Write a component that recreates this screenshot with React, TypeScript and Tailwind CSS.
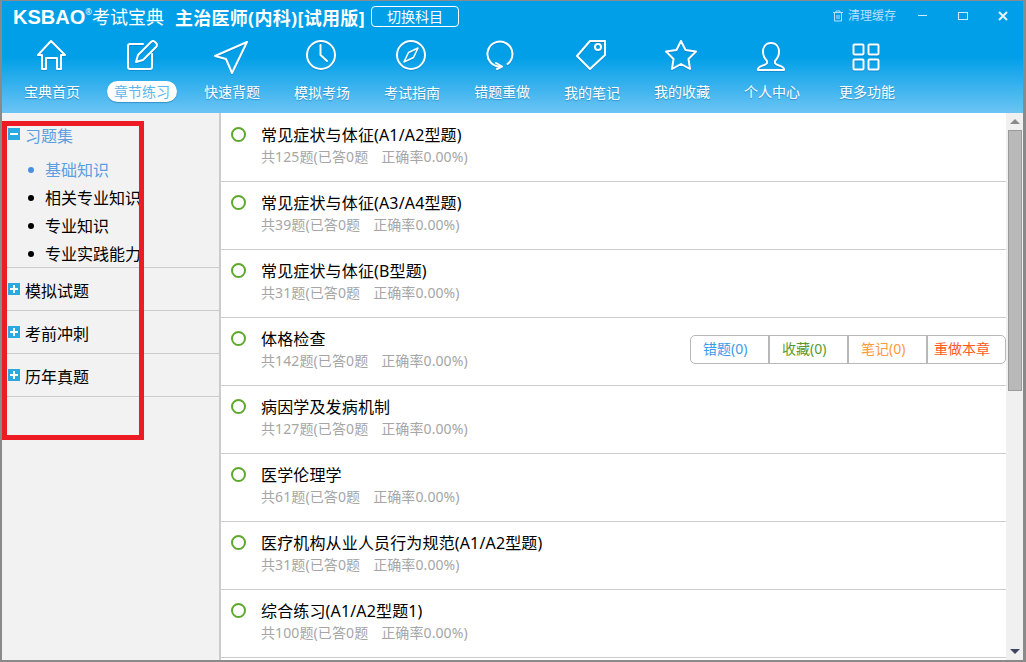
import type { ReactNode } from "react";

const sw = { fill: "none", stroke: "currentColor", strokeWidth: 2, strokeLinejoin: "round" as const, strokeLinecap: "round" as const };

const icons: Record<string, ReactNode> = {
  home: <path {...sw} d="M18 4 L5 18 H9 V32 H13 V21 H24 V32 H28 V18 H32 Z" />,
  edit: (
    <>
      <path {...sw} d="M20 7 H7 Q5 7 5 9 V30 Q5 32 7 32 H27 Q29 32 29 30 V17" />
      <path {...sw} d="M13 25 L15 18 L28 5 Q30 3 32 5 L33 6 Q35 8 33 10 L20 23 Z" />
    </>
  ),
  send: <path {...sw} d="M34 5 L2 19 L13 22 L19 36 Z" />,
  clock: (
    <>
      <circle {...sw} cx="18" cy="18" r="14" />
      <path {...sw} d="M17.5 8 V18 L24 24" />
    </>
  ),
  compass: (
    <>
      <circle {...sw} cx="18" cy="18" r="14" />
      <path {...sw} strokeWidth={1.6} d="M25 11 L20.5 20.5 L11 25 L15.5 15.5 Z" />
    </>
  ),
  retry: (
    <>
      <path {...sw} d="M24.5 27 A12.5 12.5 0 1 0 18 29.5" />
      <path {...sw} d="M13 26 L19 29.5 L14 32" />
    </>
  ),
  tag: (
    <>
      <path {...sw} d="M17 4 L4 19 L17 32 L32 18 V4 Z" />
      <circle {...sw} cx="25" cy="10" r="3" />
    </>
  ),
  star: <path {...sw} d="M18 4 L22.5 13 L33 14.5 L25.5 22 L27 32 L18 27 L9 32 L10.5 22 L3 14.5 L13.5 13 Z" />,
  user: <path {...sw} d="M18 6 C12 6 10 11 10 15 C10 19 12 22 14 24 V26 C14 28 5 29 5 32 V33 H31 V32 C31 29 22 28 22 26 V24 C24 22 26 19 26 15 C26 11 24 6 18 6 Z" />,
  grid: (
    <>
      <rect {...sw} x="5.5" y="7.5" width="10" height="10" rx="1" />
      <rect {...sw} x="20.5" y="7.5" width="10" height="10" rx="1" />
      <rect {...sw} x="5.5" y="22.5" width="10" height="10" rx="1" />
      <rect {...sw} x="20.5" y="22.5" width="10" height="10" rx="1" />
    </>
  ),
};

const navItems = [
  { label: "宝典首页", icon: "home" },
  { label: "章节练习", icon: "edit", active: true },
  { label: "快速背题", icon: "send" },
  { label: "模拟考场", icon: "clock", low: true },
  { label: "考试指南", icon: "compass", low: true },
  { label: "错题重做", icon: "retry" },
  { label: "我的笔记", icon: "tag", low: true },
  { label: "我的收藏", icon: "star" },
  { label: "个人中心", icon: "user" },
  { label: "更多功能", icon: "grid" },
];

const chapters = [
  { title: "常见症状与体征(A1/A2型题)", total: 125 },
  { title: "常见症状与体征(A3/A4型题)", total: 39 },
  { title: "常见症状与体征(B型题)", total: 31 },
  { title: "体格检查", total: 142, hover: true },
  { title: "病因学及发病机制", total: 127 },
  { title: "医学伦理学", total: 61 },
  { title: "医疗机构从业人员行为规范(A1/A2型题)", total: 31 },
  { title: "综合练习(A1/A2型题1)", total: 100 },
];

function TreeBox({ open }: { open?: boolean }) {
  return (
    <span className="relative h-3 w-3 shrink-0 bg-[#29abe2]">
      <span className="absolute top-[5px] left-[2px] h-[2px] w-2 bg-white" />
      {!open && <span className="absolute top-[2px] left-[5px] h-2 w-[2px] bg-white" />}
    </span>
  );
}

function TreeGroup({ label }: { label: string }) {
  return (
    <div className="flex h-[43px] items-start gap-[5px] border-b border-[#cccccc] pt-[15px] pl-[6px] text-black">
      <TreeBox />
      <span className="-mt-[4px] text-[16px] leading-[24px]">{label}</span>
    </div>
  );
}

function Sidebar() {
  const subs = ["基础知识", "相关专业知识", "专业知识", "专业实践能力"];
  return (
    <aside className="relative w-[219px] shrink-0 border-r-2 border-[#cccccc] bg-[#f2f2f2]">
      <div className="h-[155px] border-b border-[#cccccc] pt-[15px] pl-[6px]">
        <div className="flex items-start gap-[5px] text-[#5b9fe0]">
          <TreeBox open />
          <span className="-mt-[4px] text-[16px] leading-[24px]">习题集</span>
        </div>
        <ul className="mt-[8px]">
          {subs.map((s, i) => (
            <li
              key={s}
              className={`flex h-[28px] items-center gap-[11px] pl-[20px] text-[16px] whitespace-nowrap ${i === 0 ? "text-[#5b9fe0]" : "text-black"}`}
            >
              <span className={`h-[6px] w-[6px] rounded-full ${i === 0 ? "bg-[#4a90e2]" : "bg-black"}`} />
              {s}
            </li>
          ))}
        </ul>
      </div>
      <TreeGroup label="模拟试题" />
      <TreeGroup label="考前冲刺" />
      <TreeGroup label="历年真题" />
      <div className="absolute top-[8px] left-0 h-[319px] w-[142px] border-[5px] border-[#ed1c24]" />
    </aside>
  );
}

function ActionButtons() {
  const cell = "flex h-full w-[79px] items-center border-r-2 border-[#b8b8b8] pb-[2px] pl-[12px] text-[14px]";
  return (
    <div className="mb-[4px] flex h-[29px] w-[316px] items-center overflow-hidden rounded-[5px] border border-[#b8b8b8] bg-white">
      <span className={`${cell} text-[#3a9be8]`}>错题(0)</span>
      <span className={`${cell} text-[#5b9a2a]`}>收藏(0)</span>
      <span className={`${cell} text-[#ff9a3a]`}>笔记(0)</span>
      <span className="flex h-full flex-1 items-center pb-[2px] pl-[6px] text-[14px] text-[#ff5a1e]">重做本章</span>
    </div>
  );
}

function ChapterRow({ title, total, hover }: { title: string; total: number; hover?: boolean }) {
  return (
    <div className="flex h-[68px] shrink-0 items-center justify-between border-b border-[#cccccc] pl-[10px]">
      <div className="flex h-full items-start gap-[15px]">
        <span className="mt-[13px] h-[15px] w-[15px] rounded-full border-2 border-[#5fa82e]" />
        <div className="pt-[9px]">
          <div className="text-[16px] leading-[24px] tracking-[0.15px] text-black">{title}</div>
          <div className="text-[14px] leading-[20px] tracking-[0.1px] text-[#a6a6a6]">
            共{total}题(已答0题<span className="ml-[13px]">正确率0.00%)</span>
          </div>
        </div>
      </div>
      {hover && <ActionButtons />}
    </div>
  );
}

function Scrollbar() {
  return (
    <div className="flex w-[17px] shrink-0 flex-col items-center bg-[#f0f0f0]">
      <div className="flex h-[17px] w-full items-center justify-center">
        <span className="h-0 w-0 border-x-[5px] border-b-[5px] border-x-transparent border-b-[#8a8a8a]" />
      </div>
      <div className="ml-[1px] h-[261px] w-[14px] border border-[#9a9a9a] bg-[#b9b9b9]" />
      <div className="flex-1" />
      <div className="flex h-[17px] w-full items-center justify-center">
        <span className="h-0 w-0 border-x-[5px] border-t-[5px] border-x-transparent border-t-[#3f4560]" />
      </div>
    </div>
  );
}

export default function App() {
  return (
    <div className="flex h-[662px] w-[1026px] flex-col overflow-hidden border-t border-r-[3px] border-b-2 border-l-2 border-[#8a8a8a] bg-white font-['Noto_Sans','Noto_Sans_CJK_SC',sans-serif]">
      <header className="h-[112px] shrink-0 bg-[linear-gradient(#019fe8_0,#019fe8_50%,#6cc4f4_100%)] text-white">
        <div className="flex h-[31px] items-center pl-[11px]">
          <span className="font-['Liberation_Sans',sans-serif] text-[20px] leading-none font-bold">KSBAO</span>
          <span className="-mt-[10px] text-[8px] leading-none">®</span>
          <span className="text-[18px] leading-none">考试宝典</span>
          <span className="mt-[2px] ml-[11px] text-[18px] leading-none font-bold tracking-[0.3px]">主治医师(内科)[试用版]</span>
          <button className="ml-[6px] h-[21px] w-[88px] rounded-[4px] border border-white text-[14px] leading-none">切换科目</button>
          <div className="mb-[2px] ml-auto flex items-center text-[12px] text-[#b5e0f8]">
            <svg viewBox="0 0 12 12" className="h-3 w-3" fill="none" stroke="currentColor">
              <path d="M1 2.5 H11 M4 2.5 V1 H8 V2.5 M2.5 2.5 V11 H9.5 V2.5 M5 5 V9 M7 5 V9" />
            </svg>
            <span className="ml-[4px]">清理缓存</span>
            <span className="ml-[22px] h-[1px] w-[9px] bg-[#cfeafa]" />
            <span className="ml-[31px] h-[8px] w-[10px] border border-[#cfeafa]" />
            <svg viewBox="0 0 10 10" className="mr-[15px] ml-[30px] h-[10px] w-[10px]" stroke="#e4f4fd" strokeWidth="2">
              <path d="M1 1 L9 9 M9 1 L1 9" />
            </svg>
          </div>
        </div>
        <nav className="flex pt-[5px] pl-[5px]">
          {navItems.map((item, i) => (
            <div key={item.label} className={`flex w-[90px] flex-col items-center ${i === 9 ? "ml-[5px]" : ""}`}>
              <svg viewBox="0 0 36 36" className="-ml-[2px] h-9 w-9 overflow-visible drop-shadow-[0_1px_0_rgba(0,90,160,0.35)]">
                {icons[item.icon]}
              </svg>
              {item.active ? (
                <span className="mt-[8px] flex h-[21px] w-[70px] items-center justify-center rounded-full bg-white text-[14px] text-[#5db8ea] shadow-[0_1px_1px_rgba(0,80,140,0.4)]">
                  {item.label}
                </span>
              ) : (
                <span className={`mt-[8px] flex h-[21px] items-center text-[14px] whitespace-nowrap [text-shadow:0_1px_1px_rgba(0,80,140,0.4)] ${item.low ? "pt-[2px]" : ""}`}>
                  {item.label}
                </span>
              )}
            </div>
          ))}
        </nav>
      </header>
      <main className="flex min-h-0 flex-1">
        <Sidebar />
        <section className="flex min-w-0 flex-1 flex-col overflow-hidden pt-[1px]">
          {chapters.map((c) => (
            <ChapterRow key={c.title} {...c} />
          ))}
        </section>
        <Scrollbar />
      </main>
    </div>
  );
}
